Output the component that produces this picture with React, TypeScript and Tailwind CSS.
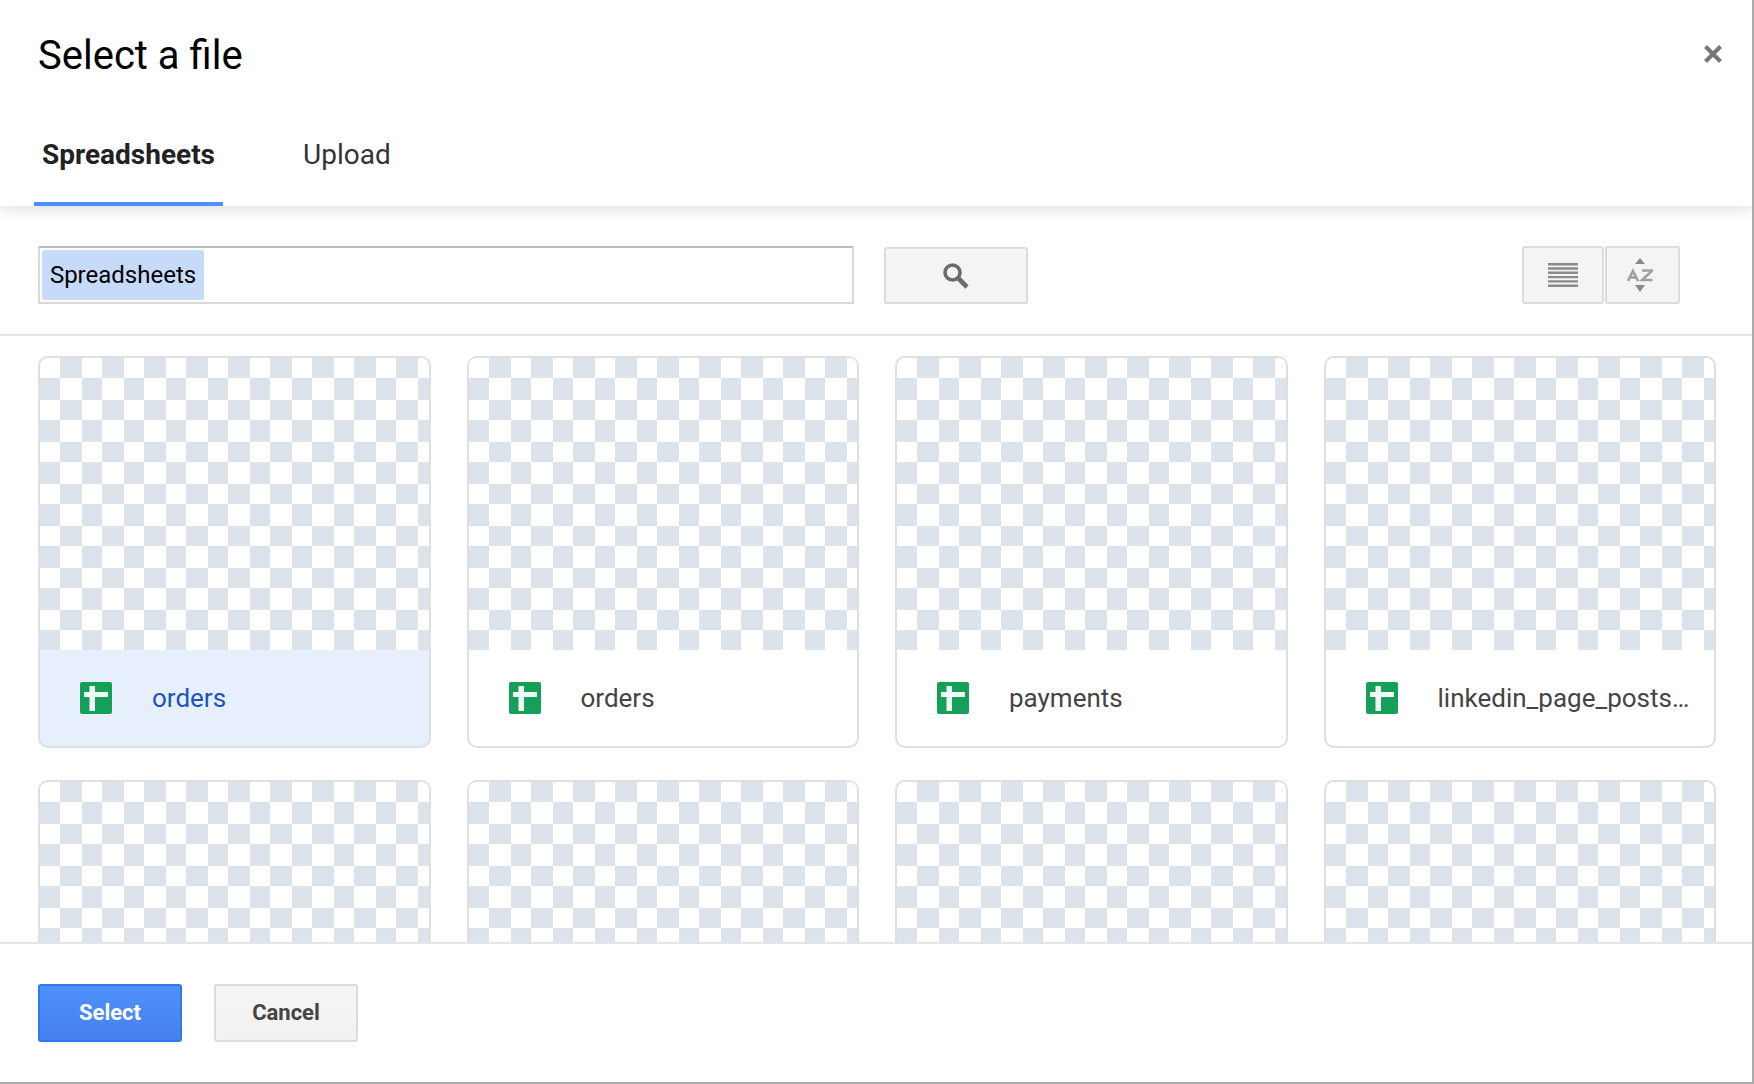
const ROBOTO = "font-['Roboto',sans-serif]";

function SheetIcon() {
  return (
    <svg width="32" height="32" viewBox="0 0 32 32" className="shrink-0">
      <rect width="32" height="32" rx="2" fill="#14a058" />
      <rect x="4" y="10" width="24" height="5" fill="#f2faf5" />
      <rect x="9.5" y="4" width="5.5" height="25" fill="#f2faf5" />
    </svg>
  );
}

function Card({ name, selected }: { name?: string; selected?: boolean }) {
  return (
    <div
      className={`h-[392px] overflow-hidden rounded-[10px] border-2 border-[#dcdfe4] ${selected ? "bg-[#e8effc]" : "bg-white"}`}
    >
      <div className="h-[292px] bg-[conic-gradient(at_20px_20px,#dde3eb_25%,white_0_50%,#dde3eb_0_75%,white_0)] bg-[length:42px_42px]" />
      {name && (
        <div className="flex h-[96px] items-center pl-[40px]">
          <SheetIcon />
          <span
            className={`ml-[40px] whitespace-nowrap text-[26px] ${selected ? "text-[#1a55bd]" : "text-[#444444]"}`}
          >
            {name}
          </span>
        </div>
      )}
    </div>
  );
}

export default function App() {
  const names = ["orders", "orders", "payments", "linkedin_page_posts…"];
  return (
    <div className={`flex h-[1084px] w-[1754px] flex-col overflow-hidden border-r-2 border-b-2 border-[#aaaaaa] bg-white ${ROBOTO}`}>
      <header className="relative z-10 shrink-0 shadow-[0_4px_12px_rgba(0,0,0,0.12)]">
        <div className="flex h-[108px] items-center justify-between pl-[38px] pr-[29px]">
          <h1 className="mt-[3px] text-[40px] font-normal leading-none text-black">Select a file</h1>
          <svg width="20" height="20" viewBox="0 0 20 20" className="mb-[1px]">
            <path d="M2.5 2.5l15 15M17.5 2.5l-15 15" stroke="#777777" strokeWidth="4.2" />
          </svg>
        </div>
        <div className="flex h-[98px] pl-[34px]">
          <div className="flex h-full w-[189px] items-center justify-center border-b-4 border-[#4d90fe] text-[28px] font-bold text-[#222222]">
            Spreadsheets
          </div>
          <div className="ml-[80px] flex h-full items-center pb-[4px] text-[28px] text-[#333333]">Upload</div>
        </div>
      </header>

      <div className="flex h-[130px] shrink-0 items-start border-b-2 border-[#e5e5e5] pl-[38px] pr-[72px] pt-[40px]">
        <div className="flex h-[58px] w-[816px] items-center border-2 border-[#d9d9d9] border-t-[#bbbbbb] pl-[2px]">
          <span className="flex h-[50px] w-[162px] items-center justify-center rounded-[3px] bg-[#c6daf9] text-[24px] text-black">
            Spreadsheets
          </span>
        </div>
        <button className="ml-[30px] mt-[1px] flex h-[57px] w-[144px] items-center justify-center rounded-[2px] border-2 border-[#dcdcdc] bg-[#f4f4f4]">
          <svg width="30" height="30" viewBox="0 0 30 30">
            <circle cx="11.5" cy="11.5" r="7.5" fill="none" stroke="#6c6c6c" strokeWidth="3.6" />
            <path d="M17 17l9 9" stroke="#6c6c6c" strokeWidth="4.6" />
          </svg>
        </button>
        <div className="ml-auto flex gap-[1px]">
          <button className="flex h-[58px] w-[82px] items-center justify-center rounded-[3px] border-2 border-[#dcdcdc] bg-[#f4f4f4]">
            <svg width="30" height="24" viewBox="0 0 30 24">
              <path d="M0 1.2h30M0 5.5h30M0 9.8h30M0 14.1h30M0 18.4h30M0 22.7h30" stroke="#8a8a8a" strokeWidth="2.4" />
            </svg>
          </button>
          <button className="flex h-[58px] w-[75px] items-center justify-center rounded-[3px] border-2 border-[#dcdcdc] bg-[#f4f4f4] pr-[5px]">
            <svg width="26" height="34" viewBox="0 0 26 34">
              <path d="M13 0l5 6H8zM13 34l-5-7h10z" fill="#8a8a8a" />
              <path d="M1 23l5-10 5 10M2.8 19.5h6.4M15 12.5h10.5L15 22h10.5" fill="none" stroke="#a0a0a0" strokeWidth="2.6" />
            </svg>
          </button>
        </div>
      </div>

      <main className="min-h-0 flex-1 overflow-hidden pl-[38px] pr-[36px] pt-[20px]">
        <div className="grid grid-cols-4 gap-x-[36px] gap-y-[32px]">
          {names.map((n, i) => (
            <Card key={i} name={n} selected={i === 0} />
          ))}
          <Card />
          <Card />
          <Card />
          <Card />
        </div>
      </main>

      <footer className="flex h-[140px] shrink-0 items-start gap-[32px] border-t-2 border-[#e5e5e5] bg-white pl-[38px] pt-[40px]">
        <button className="h-[58px] w-[144px] rounded-[3px] border-2 border-[#3079ed] bg-gradient-to-b from-[#4f90fc] to-[#4581ee] pb-[2px] text-[22px] font-bold text-white">
          Select
        </button>
        <button className="h-[58px] w-[144px] rounded-[3px] border-2 border-[#dcdcdc] bg-gradient-to-b from-[#f5f5f5] to-[#f1f1f1] pb-[2px] text-[22px] font-bold text-[#444444]">
          Cancel
        </button>
      </footer>
    </div>
  );
}
